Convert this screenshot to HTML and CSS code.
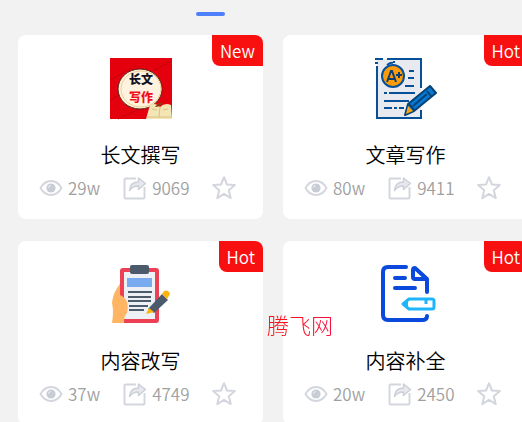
FILE: index.html
```
<!DOCTYPE html>
<html lang="zh-CN">
<head>
    <meta charset="UTF-8">
    <meta name="viewport" content="width=device-width, initial-scale=1.0">
    <title>写作</title>
    <link rel="stylesheet" href="styles.css">
</head>
<body>
    <svg class="symbols" aria-hidden="true">
        <symbol id="eye" viewBox="0 0 24 24">
            <path d="M1.500 12C4 7.500 8 5 12 5s8 2.500 10.500 7C20 16.500 16 19 12 19S4 16.500 1.500 12z" fill="none" stroke="#d3d6dd" stroke-width="1.900"/>
            <circle cx="12" cy="12" r="4.600" fill="#c8ccd5"/>
            <path d="M9.500 11.500a3 3 0 0 1 2-2" fill="none" stroke="#fff" stroke-width="1"/>
        </symbol>
        <symbol id="share" viewBox="0 0 24 24">
            <path d="M13 2.500H2.500a1 1 0 0 0-1 1v18a1 1 0 0 0 1 1h18a1 1 0 0 0 1-1V11" fill="none" stroke="#d3d6dd" stroke-width="1.900"/>
            <path d="M6.500 14.500c.5-6 4-8.500 9-8.500V2l7 5.500-7 6V10c-4 0-6.500 1-9 4.500z" fill="#e6e8ed" stroke="#cdd0d8" stroke-width="1.500" stroke-linejoin="round"/>
        </symbol>
        <symbol id="star" viewBox="0 0 24 24">
            <path d="M12 1.200l3 7.300 7.800.6-6 5.100 1.900 7.900-6.700-4.200-6.700 4.200 1.900-7.900-6-5.100 7.800-.6z" fill="none" stroke="#d3d6dd" stroke-width="2" stroke-linejoin="round"/>
        </symbol>
    </svg>

    <div class="tab-line"></div>

    <main class="cards">
        <article class="card">
            <span class="badge">New</span>
            <svg class="picture" viewBox="0 0 62 62" aria-hidden="true">
                <rect width="62" height="61" fill="#e4000c"/>
                <path d="M0 22L26 8M0 42L18 32M8 61L36 48M44 12L62 3" stroke="#c5000b" stroke-width="1"/>
                <ellipse cx="30" cy="31" rx="22" ry="20" fill="#fff3df" stroke="#532018" stroke-width="1"/>
                <ellipse cx="31" cy="31" rx="20" ry="18" fill="none" stroke="#edcf8e" stroke-width="1"/>
                <text class="seal" x="31" y="26" fill="#101024">长文</text>
                <text class="seal" x="31" y="44" fill="#f0101c">写作</text>
                <path d="M36 61l4-14q6-3 10 2 5-5 11-2l1 14z" fill="#f3e5b4"/>
                <path d="M50 49l-1 10M42 51l5 1M53 52l5-1M37 59h24" fill="none" stroke="#d8c188" stroke-width="1"/>
                <path d="M45 49q4-5 8-4-3 4-8 4z" fill="#8d3d13"/>
            </svg>
            <h2 class="title">长文撰写</h2>
            <div class="stats">
                <span class="stat"><svg class="icon" aria-hidden="true"><use href="#eye"/></svg>29w</span>
                <span class="stat"><svg class="icon" aria-hidden="true"><use href="#share"/></svg>9069</span>
                <button class="star" aria-label="收藏"><svg class="icon" aria-hidden="true"><use href="#star"/></svg></button>
            </div>
        </article>

        <article class="card">
            <span class="badge">Hot</span>
            <svg class="picture" viewBox="0 0 62 62" aria-hidden="true">
                <path d="M2 1h44v59H2z" fill="#e9eaf0"/>
                <path d="M2 8v52h44v-8M12 1h34v29M0 1h8M0 5h3" fill="none" stroke="#06509a" stroke-width="2"/>
                <path d="M34 13h5M33 20h6M30 28h9M9 35h3M14 35h26M9 43h25M9 50h8M19 50h3M24 50h5" stroke="#06509a" stroke-width="2"/>
                <circle cx="18" cy="18" r="11" fill="#ff9b09" stroke="#06509a" stroke-width="2"/>
                <path d="M12 7q4-3 6-2M18 4h2" fill="none" stroke="#06509a" stroke-width="2"/>
                <path d="M12 24l4-11h1l4 11M13 21h7M21 17h6M24 14v6" fill="none" stroke="#103e70" stroke-width="2"/>
                <path d="M30 57l3-11 22-18 6 7-22 18z" fill="#0878d2" stroke="#064274" stroke-width="2" stroke-linejoin="round"/>
                <path d="M38 48l14-12M52 33l4 5M34 46l5 6" stroke="#064274" stroke-width="2"/>
                <path d="M31 56l2-8 5 5z" fill="#ffa316"/>
            </svg>
            <h2 class="title">文章写作</h2>
            <div class="stats">
                <span class="stat"><svg class="icon" aria-hidden="true"><use href="#eye"/></svg>80w</span>
                <span class="stat"><svg class="icon" aria-hidden="true"><use href="#share"/></svg>9411</span>
                <button class="star" aria-label="收藏"><svg class="icon" aria-hidden="true"><use href="#star"/></svg></button>
            </div>
        </article>

        <article class="card">
            <span class="badge">Hot</span>
            <svg class="picture" viewBox="0 0 62 62" aria-hidden="true">
                <path d="M10 20Q3 28 2 39q2 8 0 20h13l2-24z" fill="#ffb563"/>
                <rect x="10" y="4" width="39" height="55" rx="3" fill="#ed4055"/>
                <rect x="14" y="8" width="31" height="47" fill="#edf0f4"/>
                <rect x="20" y="1" width="19" height="9" rx="2" fill="#4b5b6b"/>
                <rect x="17" y="14" width="25" height="9" fill="#78aaf0"/>
                <path d="M18 28h24M18 33h23M18 37h23M19 42h19M19 46h15" stroke="#4d5b6b" stroke-width="2"/>
                <path d="M10 19v12q10 4 7 18-3 2-3 10H6l-1-18z" fill="#ffb563"/>
                <path d="M38 45l14-15 6 6-14 13z" fill="#4b5b6b"/>
                <path d="M36 50l3-6 5 4z" fill="#ffb20d"/>
                <path d="M52 30l2-3q4-2 6 3l-3 5z" fill="#ffb20d"/>
            </svg>
            <h2 class="title">内容改写</h2>
            <div class="stats">
                <span class="stat"><svg class="icon" aria-hidden="true"><use href="#eye"/></svg>37w</span>
                <span class="stat"><svg class="icon" aria-hidden="true"><use href="#share"/></svg>4749</span>
                <button class="star" aria-label="收藏"><svg class="icon" aria-hidden="true"><use href="#star"/></svg></button>
            </div>
        </article>

        <article class="card">
            <span class="badge">Hot</span>
            <svg class="picture" viewBox="0 0 62 62" aria-hidden="true">
                <path d="M31 3H13Q8 3 8 8v43q0 5 5 5h34q5 0 5-4M52 28V15L40 4q-2 0-2 2v7q0 2 2 2h12M20 14h10M20 24h20" fill="none" stroke="#0a49dc" stroke-width="4" stroke-linecap="round" stroke-linejoin="round"/>
                <path d="M28 40l6-5h23q2 0 2 2v6q0 2-2 2H34zM51 36v4" fill="#fff" stroke="#1fb5fb" stroke-width="3" stroke-linejoin="round"/>
                <path d="M28 40l5-4v8z" fill="#1fb5fb"/>
            </svg>
            <h2 class="title">内容补全</h2>
            <div class="stats">
                <span class="stat"><svg class="icon" aria-hidden="true"><use href="#eye"/></svg>20w</span>
                <span class="stat"><svg class="icon" aria-hidden="true"><use href="#share"/></svg>2450</span>
                <button class="star" aria-label="收藏"><svg class="icon" aria-hidden="true"><use href="#star"/></svg></button>
            </div>
        </article>
    </main>

    <div class="watermark">腾飞网</div>
</body>
</html>
```

FILE: styles.css
```
body {
    margin: 0;
    padding-top: 12px;
    background-color: #f2f2f2;
    font-family: "Noto Sans CJK SC", sans-serif;
    font-weight: 350;
    overflow: hidden;
}

.symbols {
    display: none;
}

.tab-line {
    width: 29px;
    height: 4px;
    margin-left: 196px;
    border-radius: 2px;
    background-color: #4e80fc;
}

/* the right column runs a little past the edge */
.cards {
    display: grid;
    grid-template-columns: 1fr 1fr;
    gap: 22px 20px;
    margin: 19px -6px 0 18px;
}

.card {
    position: relative;
    display: flex;
    flex-direction: column;
    padding: 23px 21px 18px;
    border-radius: 8px;
    background-color: #fff;
}

.badge {
    position: absolute;
    top: 0;
    right: 0;
    padding: 0 8px;
    border-radius: 0 8px 0 8px;
    background-color: #f81010;
    color: #fff;
    font-size: 17px;
    line-height: 31px;
}

.picture {
    align-self: center;
    width: 62px;
    height: 62px;
}

.seal {
    font-size: 12px;
    font-weight: 900;
    text-anchor: middle;
}

.title {
    margin: 19px 0 4px;
    font-size: 20px;
    font-weight: 350;
    line-height: 32px;
    text-align: center;
    color: #000;
}

.stats {
    display: flex;
    align-items: center;
    gap: 23px;
}

.stat {
    display: flex;
    align-items: center;
    gap: 5px;
    color: #a0a0a0;
    font-size: 17px;
    line-height: 26px;
}

.icon {
    display: block;
    width: 24px;
    height: 24px;
}

.star {
    padding: 0;
    border: 0;
    background: none;
}

.watermark {
    position: absolute;
    top: 308px;
    left: 267px;
    background: linear-gradient(90deg, #ff1010, #f81040);
    background-clip: text;
    color: transparent;
    font-size: 22px;
    font-weight: 300;
    line-height: 32px;
}
```
